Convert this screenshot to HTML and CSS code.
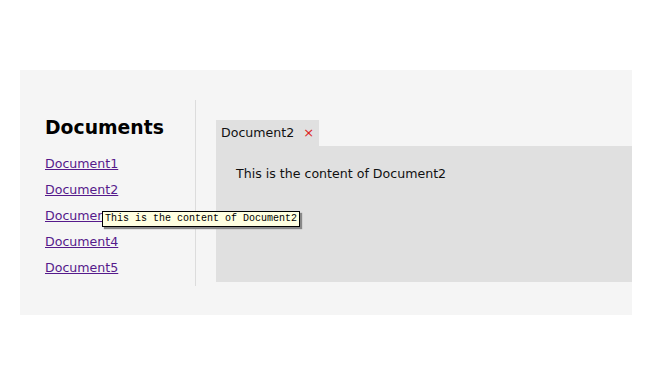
FILE: index.html
```html
<!DOCTYPE html>
<html lang="en">
<head>
  <meta charset="UTF-8">
  <title>Documents</title>
  <link rel="stylesheet" href="styles.css">
</head>
<body>
  <div id="panel">
    <!-- 左侧文档列表 -->
    <div id="sidebar">
      <h2 class="title">Documents</h2>
      <ul class="doclist">
        <li><a href="#">Document1</a></li>
        <li><a href="#">Document2</a></li>
        <li class="hovered"><a href="#">Document3</a><span class="tip">This is the content of Document2</span></li>
        <li><a href="#">Document4</a></li>
        <li><a href="#">Document5</a></li>
      </ul>
    </div>

    <!-- 右侧标签页 -->
    <div id="tabs">
      <div class="tabbar">
        <div class="tab">Document2<span class="close">&times;</span></div>
      </div>
      <div class="tabbody">This is the content of Document2</div>
    </div>
  </div>
</body>
</html>
```
FILE: styles.css
```css
body {
  margin: 0;
  background: #fff;
  font-family: "DejaVu Sans", Verdana, sans-serif;
}
#panel {
  display: flex;
  margin: 70px 0 0 20px;
  width: 612px;
  height: 245px;
  background: #f5f5f5;
  overflow: hidden;
}
#sidebar {
  width: 150px;
  height: 186px;
  margin-top: 30px;
  padding-left: 25px;
  border-right: 1px solid #dcdcdc;
}
.title {
  margin: 16px 0 15px;
  font-size: 18.8px;
  font-weight: bold;
  color: #000;
  line-height: 24px;
}
.doclist {
  list-style: none;
  margin: 0;
  padding: 0;
}
.doclist li {
  position: relative;
  height: 26px;
  line-height: 18px;
  font-size: 12.6px;
}
.doclist a {
  color: #551a8b;
}
.tip {
  position: absolute;
  left: 57px;
  top: 4px;
  padding: 0 2px;
  border: 1px solid #000;
  background: #ffffe1;
  color: #000;
  font-family: "Liberation Mono", monospace;
  font-size: 10px;
  line-height: 14px;
  white-space: nowrap;
  box-shadow: 2px 2px 1px #888;
}
#tabs {
  flex: 1;
  margin: 50px 0 0 20px;
}
.tabbar {
  display: flex;
}
.tab {
  height: 26px;
  line-height: 26px;
  padding: 0 5px 0 5px;
  background: #e0e0e0;
  font-size: 12.6px;
  color: #111;
}
.close {
  margin-left: 9px;
  color: #d22;
  font-size: 13px;
}
.tabbody {
  height: 136px;
  padding: 20px 20px 0;
  box-sizing: border-box;
  background: #e0e0e0;
  font-size: 12.6px;
  color: #111;
}
```
